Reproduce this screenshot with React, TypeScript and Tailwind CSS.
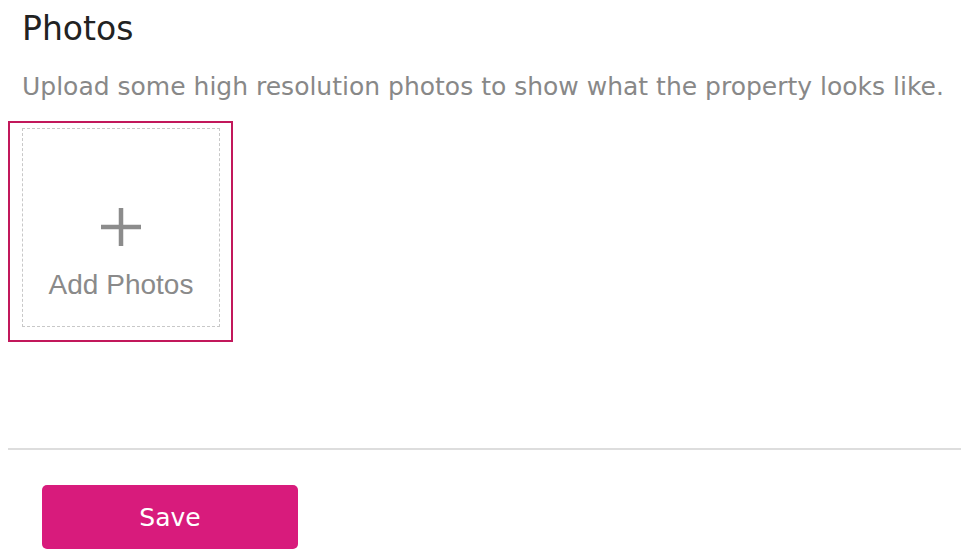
export default function App() {
  return (
    <div className="w-[961px] h-[558px] bg-white pl-2 overflow-hidden" style={{ fontFamily: "'DejaVu Sans', 'Noto Sans', sans-serif" }}>
      <h2 className="ml-[14px] pt-[11px] text-[33px] leading-[36px] text-[#222]">Photos</h2>
      <p className="ml-[14px] mt-[25px] text-[25px] leading-[30px] text-[#888]">
        Upload some high resolution photos to show what the property looks like.
      </p>

      <div className="mt-[19px] w-[225px] h-[221px] border-2 border-[#c2185b] pt-[5px] px-[12px]">
        <button className="w-[198px] h-[199px] border border-dashed border-[#c8c8c8] flex flex-col items-center pt-[78px] text-[#8a8a8a]">
          <svg width="42" height="40" viewBox="0 0 42 40">
            <path d="M21 1v38M1 20h40" stroke="#8c8c8c" strokeWidth="4.5" />
          </svg>
          <span className="mt-[22px] text-[28px] leading-[32px]" style={{ fontFamily: "'Liberation Sans', Arial, sans-serif" }}>
            Add Photos
          </span>
        </button>
      </div>

      <div className="mt-[106px] h-[2px] bg-[#dddddd]" />

      <button className="ml-[34px] mt-[35px] w-[256px] h-[64px] rounded-[5px] bg-[#d81b7c] text-white text-[25px] leading-[64px] pt-[1px]">
        Save
      </button>
    </div>
  );
}
